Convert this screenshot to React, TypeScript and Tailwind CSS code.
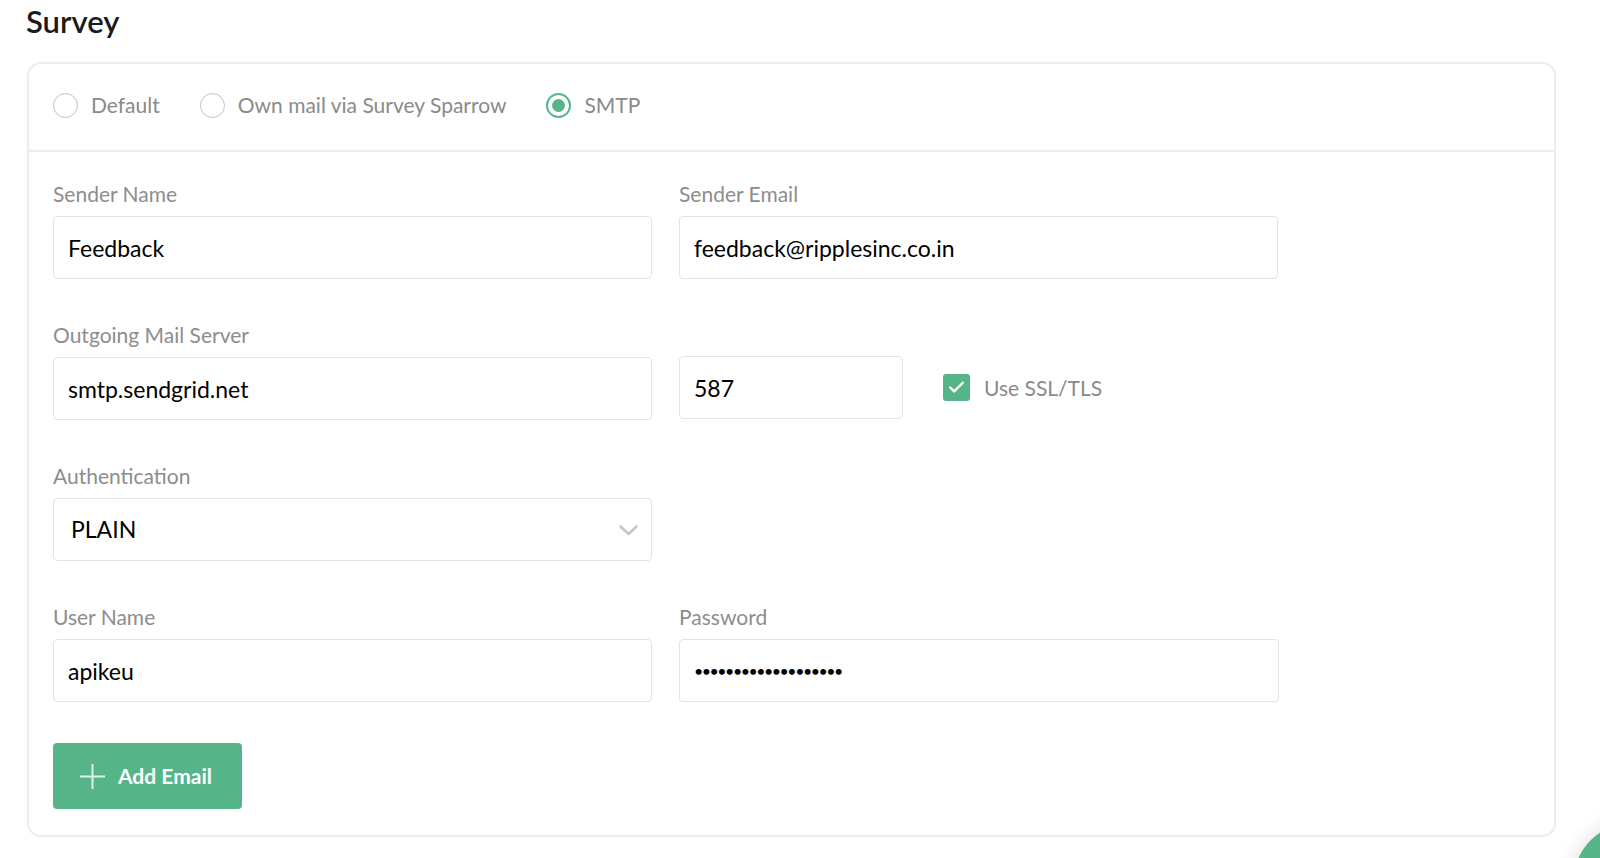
import React, { useState } from 'react';
import { Check } from 'lucide-react';

const font = { fontFamily: 'Lato, "Open Sans", sans-serif' };

const Field: React.FC<{ label?: string; children: React.ReactNode; className?: string }> = ({
  label,
  children,
  className,
}) => (
  <div className={className}>
    {label && <div className="text-[21px] leading-6 text-[#8d8d8d] mb-[10px]">{label}</div>}
    {children}
  </div>
);

const TextInput: React.FC<{ value: string; type?: string; className?: string }> = ({
  value,
  type = 'text',
  className = 'w-[599px] text-[23px]',
}) => (
  <input
    type={type}
    defaultValue={value}
    className={`${className} h-[63px] px-[14px] border-[1.5px] border-[#e3e3e3] rounded-[4px] text-black bg-white outline-none`}
    style={font}
  />
);

const Radio: React.FC<{ label: string; checked?: boolean; onClick: () => void }> = ({
  label,
  checked,
  onClick,
}) => (
  <button type="button" onClick={onClick} className="flex items-center gap-[13px]">
    <span
      className={`w-[25px] h-[25px] rounded-full flex items-center justify-center ${
        checked ? 'border-2 border-[#55b589]' : 'border-[1.5px] border-[#c2c2c2]'
      }`}
    >
      {checked && <span className="w-[13px] h-[13px] rounded-full bg-[#55b589]" />}
    </span>
    <span className="text-[21px] text-[#8a8a8a]">{label}</span>
  </button>
);

export default function App() {
  const [mode, setMode] = useState('smtp');
  const [ssl, setSsl] = useState(true);

  return (
    <div className="relative h-[858px] w-[1600px] bg-white overflow-hidden" style={font}>
      <div className="pl-[26px] pt-[3px]">
        <h1 className="text-[31px] font-semibold text-[#1b1b1b] leading-9">Survey</h1>

        <div className="mt-[23px] ml-[1px] w-[1529px] border-2 border-[#ededed] rounded-[14px]">
          <div className="h-[88px] pb-[4px] px-[24px] flex items-center gap-[40px] border-b-2 border-[#ededed]">
            <Radio label="Default" checked={mode === 'default'} onClick={() => setMode('default')} />
            <Radio
              label="Own mail via Survey Sparrow"
              checked={mode === 'own'}
              onClick={() => setMode('own')}
            />
            <Radio label="SMTP" checked={mode === 'smtp'} onClick={() => setMode('smtp')} />
          </div>

          <div className="px-[24px] pt-[30px] pb-[26px] flex flex-col gap-[44px]">
            <div className="flex gap-[27px]">
              <Field label="Sender Name">
                <TextInput value="Feedback" />
              </Field>
              <Field label="Sender Email">
                <TextInput value="feedback@ripplesinc.co.in" />
              </Field>
            </div>

            <div className="flex gap-[27px] items-end">
              <Field label="Outgoing Mail Server">
                <TextInput value="smtp.sendgrid.net" />
              </Field>
              <div className="flex items-center gap-[40px] pb-[1px]">
                <TextInput value="587" className="w-[224px] text-[23px]" />
                <button
                  type="button"
                  onClick={() => setSsl(!ssl)}
                  className="flex items-center gap-[14px]"
                >
                  <span
                    className={`w-[27px] h-[27px] rounded-[3px] flex items-center justify-center ${
                      ssl ? 'bg-[#55b589]' : 'border-2 border-[#c9c9c9]'
                    }`}
                  >
                    {ssl && <Check className="w-[19px] h-[19px] text-white" strokeWidth={3} />}
                  </span>
                  <span className="text-[21px] text-[#8a8a8a]">Use SSL/TLS</span>
                </button>
              </div>
            </div>

            <Field label="Authentication">
              <div className="w-[599px] h-[63px] border-[1.5px] border-[#e3e3e3] rounded-[4px] flex items-center justify-between pl-[17px] pr-[13px]">
                <span className="text-[23px] text-black">PLAIN</span>
                <svg width="19" height="11" viewBox="0 0 19 11" fill="none" className="mt-[1px]">
                  <path
                    d="M1.5 1.5 L9.5 9 L17.5 1.5"
                    stroke="#c6c6c6"
                    strokeWidth="2.6"
                    strokeLinecap="round"
                    strokeLinejoin="round"
                  />
                </svg>
              </div>
            </Field>

            <div className="flex gap-[27px]">
              <Field label="User Name">
                <TextInput value="apikeu" />
              </Field>
              <Field label="Password">
                <TextInput
                  value="apikeyapikeyapikey1"
                  type="password"
                  className="w-[600px] text-[16px] tracking-[-1.5px]"
                />
              </Field>
            </div>

            <div className="-mt-[3px]">
              <button
                type="button"
                className="w-[189px] h-[66px] rounded-[4px] bg-[#55b589] flex items-center pl-[26px] gap-[12px] text-white"
              >
                <svg width="27" height="27" viewBox="0 0 27 27" fill="none">
                  <path d="M13.5 1 V26 M1 13.5 H26" stroke="#e0f2e9" strokeWidth="2" />
                </svg>
                <span className="text-[21px] font-bold">Add Email</span>
              </button>
            </div>
          </div>
        </div>
      </div>

      <div className="absolute left-[1574px] top-[824px] w-[112px] h-[112px] rounded-full bg-[#55b589] shadow-[0_0_22px_rgba(0,0,0,0.14)]" />
    </div>
  );
}
